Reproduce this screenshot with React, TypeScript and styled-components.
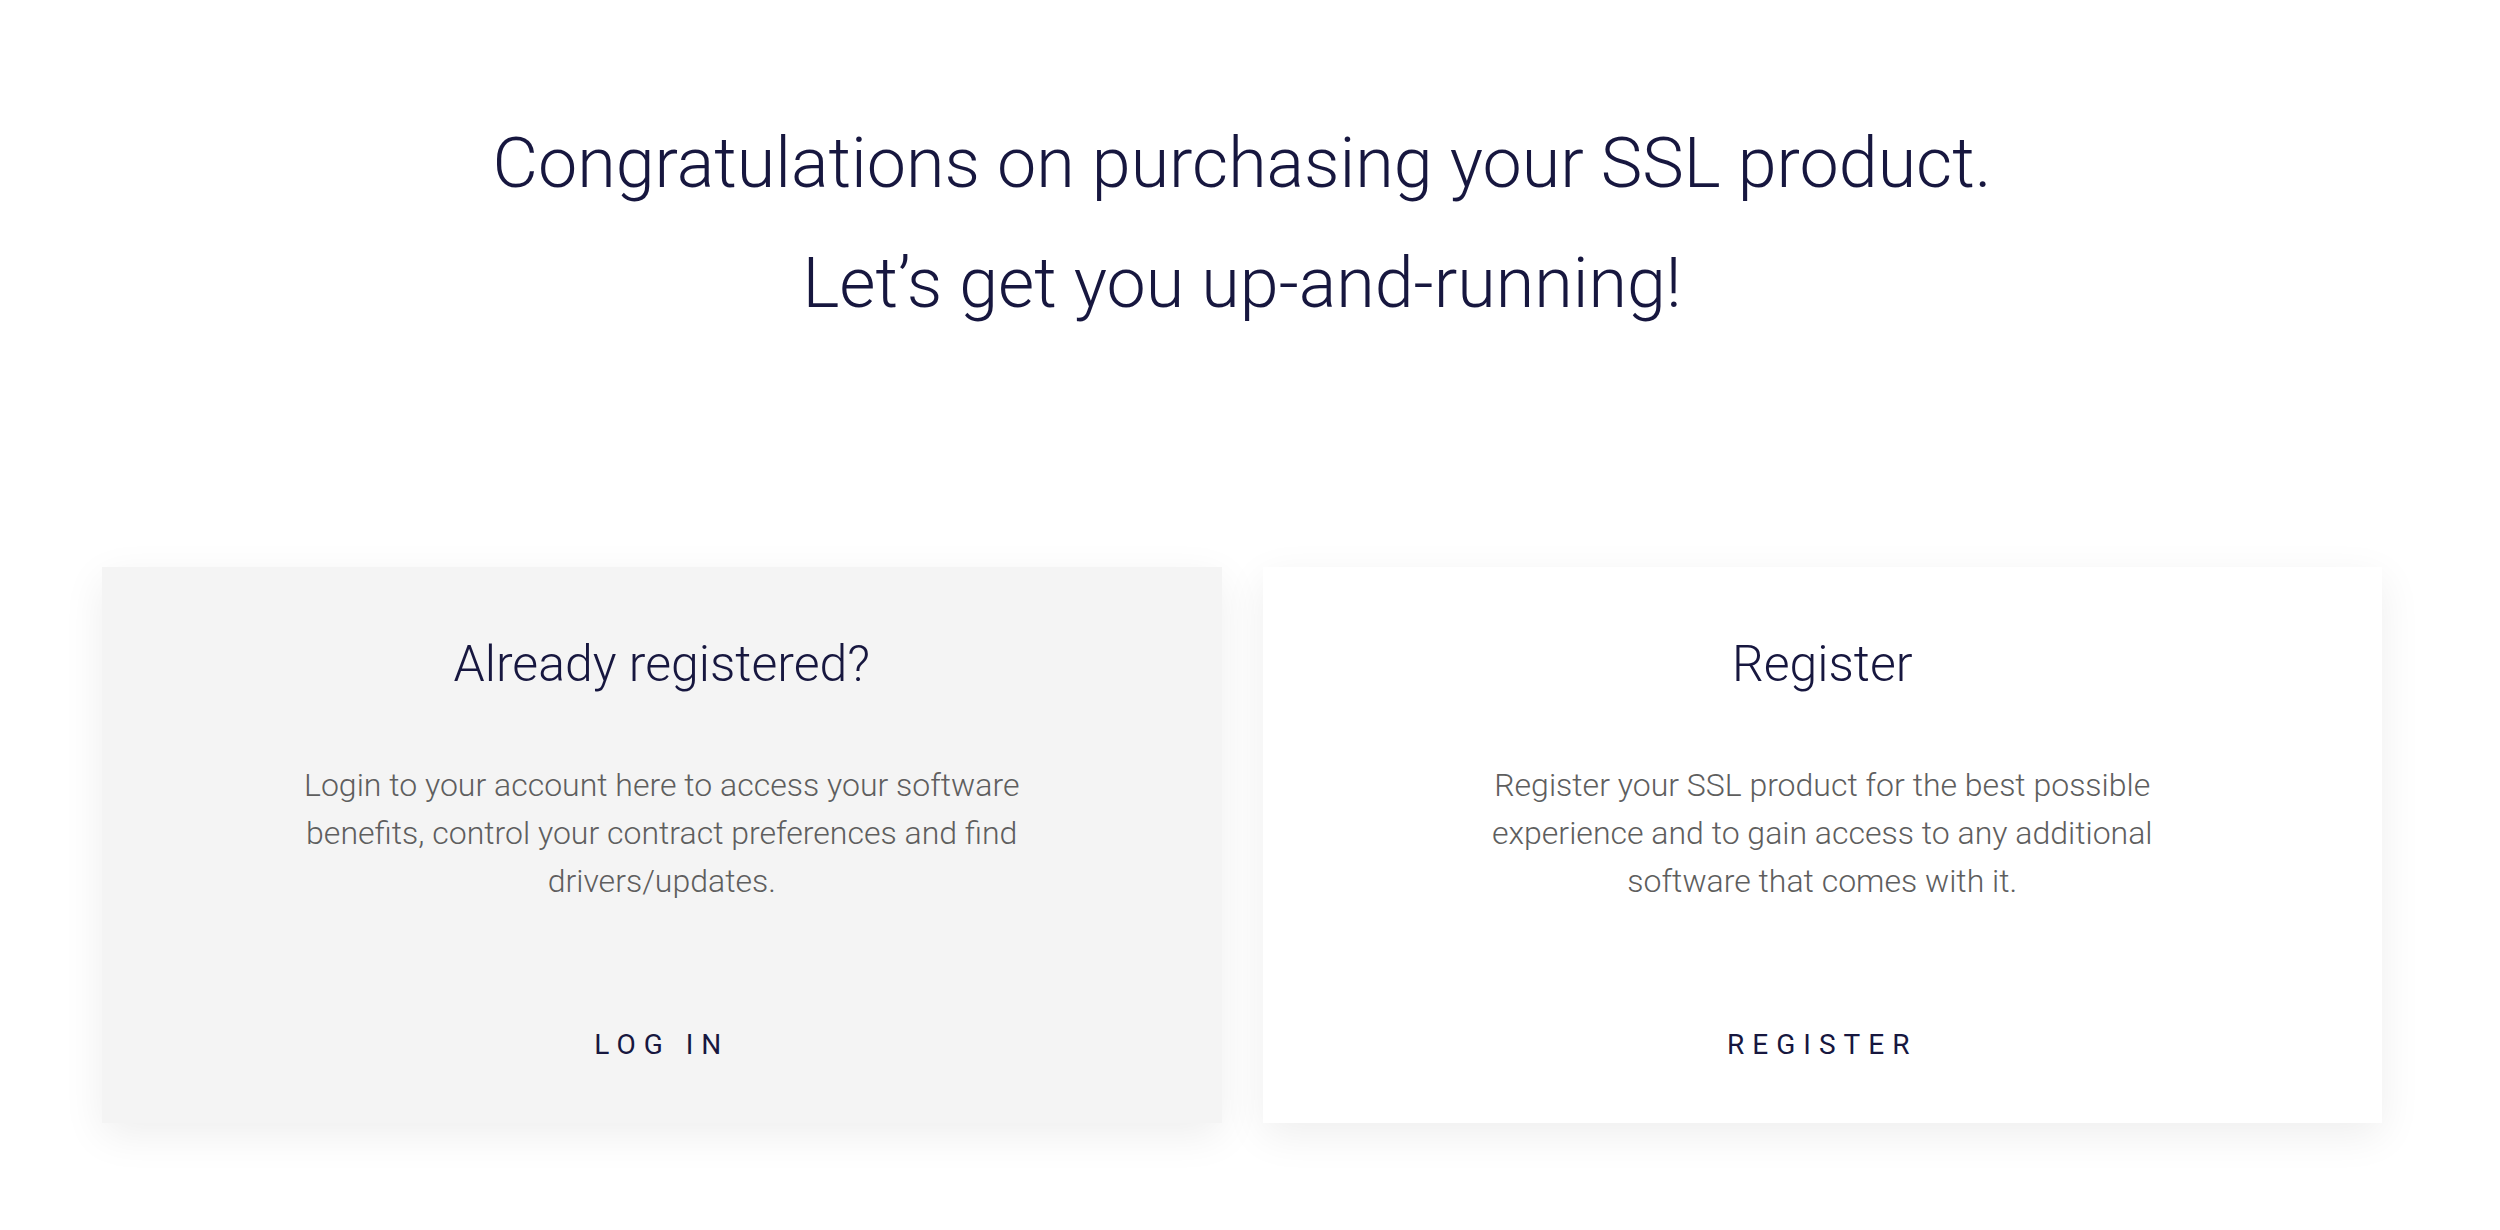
import styled, { createGlobalStyle } from 'styled-components';

const color = {
  navy: '#17173f',
  text: '#5e5e5e',
  cardGrey: '#f4f4f4',
  white: '#ffffff',
};

const GlobalStyle = createGlobalStyle`
  html, body {
    margin: 0;
    padding: 0;
    background: ${color.white};
  }
  body {
    font-family: Roboto, 'Liberation Sans', sans-serif;
  }
`;

const App = (): JSX.Element => {
  return (
    <Page>
      <GlobalStyle />
      <Heading>
        <span>Congratulations on purchasing your SSL product.</span>
        <span>Let’s get you up-and-running!</span>
      </Heading>
      <CardsGrid>
        <Card bg={color.cardGrey}>
          <CardTitle>Already registered?</CardTitle>
          <CardText>
            Login to your account here to access your software benefits,
            control your contract preferences and find drivers/updates.
          </CardText>
          <CardAction href="#login">LOG IN</CardAction>
        </Card>
        <Card bg={color.white}>
          <CardTitle>Register</CardTitle>
          <CardText>
            Register your SSL product for the best possible experience and to
            gain access to any additional software that comes with it.
          </CardText>
          <CardAction href="#register">REGISTER</CardAction>
        </Card>
      </CardsGrid>
    </Page>
  );
};

const Page = styled.div`
  width: 2484px;
  min-height: 1230px;
  box-sizing: border-box;
  padding: 103px 102px 0;
  display: flex;
  flex-direction: column;
  align-items: center;
`;

const Heading = styled.h1`
  margin: 0;
  display: flex;
  flex-direction: column;
  align-items: center;
  font-size: 70px;
  font-weight: 300;
  line-height: 120px;
  color: ${color.navy};
  text-align: center;
`;

const CardsGrid = styled.div`
  width: 100%;
  margin-top: 224px;
  display: grid;
  grid-template-columns: 1fr 1fr;
  gap: 41px;
`;

const Card = styled.div<{ bg: string }>`
  height: 556px;
  box-sizing: border-box;
  padding: 67px 200px 0;
  background-color: ${(p) => p.bg};
  box-shadow: 0 12px 40px rgba(0, 0, 0, 0.07);
  display: flex;
  flex-direction: column;
  align-items: center;
  text-align: center;
`;

const CardTitle = styled.h2`
  margin: 0;
  font-size: 50px;
  font-weight: 300;
  line-height: 60px;
  color: ${color.navy};
`;

const CardText = styled.p`
  margin: 67px 0 0;
  font-size: 32px;
  font-weight: 300;
  line-height: 48px;
  color: ${color.text};
  height: 144px;
`;

const CardAction = styled.a`
  margin-top: 119px;
  font-size: 28px;
  font-weight: 400;
  line-height: 42px;
  letter-spacing: 8px;
  color: ${color.navy};
  text-decoration: none;
  cursor: pointer;
`;

export default App;
